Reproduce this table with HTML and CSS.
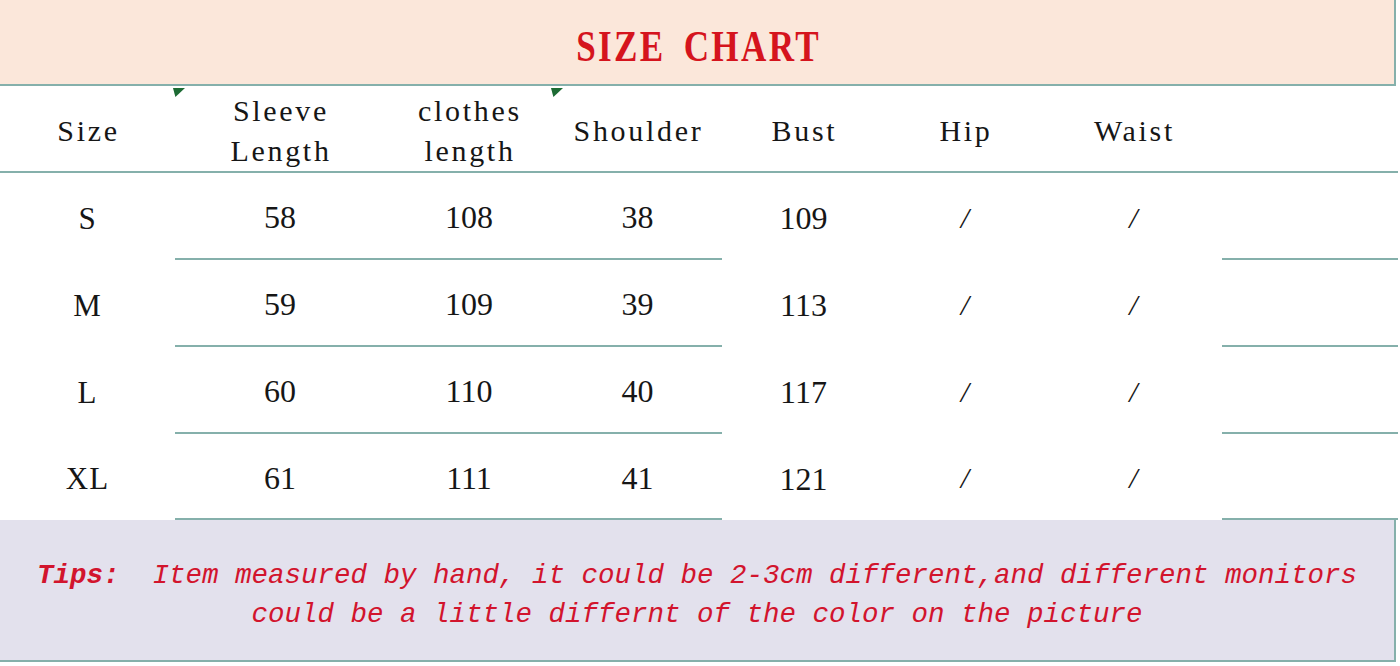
FILE: index.html
```html
<!DOCTYPE html>
<html lang="en">
<head>
<meta charset="utf-8">
<title>Size Chart</title>
<link rel="stylesheet" href="styles.css">
</head>
<body>
<div class="chart">
  <header class="title-band">
    <h1 class="title">SIZE CHART</h1>
  </header>

  <div class="grid head-row">
    <div class="cell label">Size</div>
    <div class="cell label note">Sleeve<br>Length</div>
    <div class="cell label">clothes<br>length</div>
    <div class="cell label note">Shoulder</div>
    <div class="cell label">Bust</div>
    <div class="cell label">Hip</div>
    <div class="cell label">Waist</div>
    <div class="cell"></div>
  </div>

  <div class="grid row">
    <div class="cell size">S</div>
    <div class="cell num ln">58</div>
    <div class="cell num ln">108</div>
    <div class="cell num ln">38</div>
    <div class="cell num">109</div>
    <div class="cell slash">/</div>
    <div class="cell slash">/</div>
    <div class="cell ln"></div>
  </div>

  <div class="grid row">
    <div class="cell size">M</div>
    <div class="cell num ln">59</div>
    <div class="cell num ln">109</div>
    <div class="cell num ln">39</div>
    <div class="cell num">113</div>
    <div class="cell slash">/</div>
    <div class="cell slash">/</div>
    <div class="cell ln"></div>
  </div>

  <div class="grid row">
    <div class="cell size">L</div>
    <div class="cell num ln">60</div>
    <div class="cell num ln">110</div>
    <div class="cell num ln">40</div>
    <div class="cell num">117</div>
    <div class="cell slash">/</div>
    <div class="cell slash">/</div>
    <div class="cell ln"></div>
  </div>

  <div class="grid row last">
    <div class="cell size">XL</div>
    <div class="cell num ln">61</div>
    <div class="cell num ln">111</div>
    <div class="cell num ln">41</div>
    <div class="cell num">121</div>
    <div class="cell slash">/</div>
    <div class="cell slash">/</div>
    <div class="cell ln"></div>
  </div>

  <div class="tips">
    <p class="tips-line"><b class="tips-label">Tips:</b>  Item measured by hand, it could be 2-3cm different,and different monitors</p>
    <p class="tips-line">could be a little differnt of the color on the picture</p>
  </div>
</div>
</body>
</html>
```

FILE: styles.css
```css
html, body {
  margin: 0;
  padding: 0;
  background: #ffffff;
}

.chart {
  width: 1398px;
  font-family: "Liberation Serif", "Times New Roman", serif;
  color: #161616;
}

.title-band {
  box-sizing: border-box;
  width: 1396px;
  height: 86px;
  background: #fbe7da;
  border-right: 2px solid #85b0ab;
  border-bottom: 2px solid #85b0ab;
  display: flex;
  align-items: center;
  justify-content: center;
  padding-top: 8px;
}

.title {
  margin: 0;
  display: inline-block;
  font-family: "Liberation Serif", "Times New Roman", serif;
  font-weight: bold;
  font-size: 45px;
  line-height: 1;
  color: #d5141d;
  transform: scaleX(0.78);
  letter-spacing: 3px;
  word-spacing: 9px;
  padding-left: 3px;
}

.grid {
  display: grid;
  grid-template-columns: 175px 210px 168px 169px 163px 160px 177px 176px;
}

.head-row {
  box-sizing: border-box;
  height: 87px;
  border-bottom: 2px solid #85b0ab;
}

.row {
  height: 87px;
}

.row.last {
  height: 86px;
}

.cell {
  box-sizing: border-box;
  display: flex;
  align-items: center;
  justify-content: center;
  text-align: center;
}

.ln {
  border-bottom: 2px solid #85b0ab;
}

.label {
  font-size: 30px;
  letter-spacing: 2.7px;
  line-height: 40px;
  padding-top: 4px;
  padding-left: 2px;
}

.note {
  position: relative;
}

.note::before {
  content: "";
  position: absolute;
  left: -2px;
  top: 2px;
  width: 12px;
  height: 9px;
  background: #1d6b34;
  clip-path: polygon(0 0, 100% 0, 20% 100%);
}

.num {
  font-size: 32px;
  padding-top: 4px;
}

.size {
  font-size: 31px;
  letter-spacing: 1px;
  padding-top: 4px;
}

.slash {
  font-size: 30px;
  font-style: italic;
  padding-top: 2px;
}

.tips {
  box-sizing: border-box;
  width: 1396px;
  height: 142px;
  background: #e3e1ed;
  border-right: 2px solid #85b0ab;
  border-bottom: 2px solid #85b0ab;
  display: flex;
  flex-direction: column;
  align-items: center;
  justify-content: center;
  padding-top: 10px;
}

.tips-line {
  margin: 0;
  white-space: pre;
  font-family: "Liberation Mono", "Courier New", monospace;
  font-style: italic;
  font-size: 27.5px;
  line-height: 39px;
  color: #d2142d;
}

.tips-label {
  font-weight: bold;
}
```
